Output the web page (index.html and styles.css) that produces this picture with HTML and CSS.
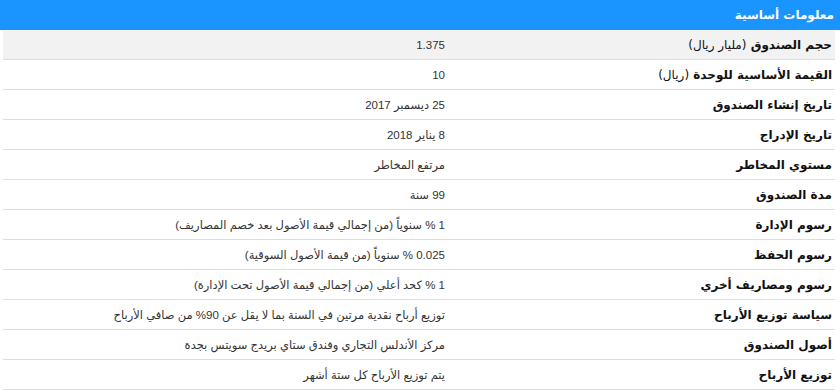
FILE: index.html
```html
<!DOCTYPE html>
<html lang="ar" dir="rtl">
<head>
<meta charset="utf-8">
<link rel="stylesheet" href="styles.css">
</head>
<body>
<div class="panel">
  <div class="panel-head">معلومات أساسية</div>
  <div class="info">
    <div class="row shaded"><div class="label">حجم الصندوق <span class="unit">(مليار ريال)</span></div><div class="value">1.375</div></div>
    <div class="row"><div class="label">القيمة الأساسية للوحدة <span class="unit">(ريال)</span></div><div class="value">10</div></div>
    <div class="row"><div class="label">تاريخ إنشاء الصندوق</div><div class="value">25 ديسمبر 2017</div></div>
    <div class="row"><div class="label">تاريخ الإدراج</div><div class="value">8 يناير 2018</div></div>
    <div class="row"><div class="label">مستوي المخاطر</div><div class="value">مرتفع المخاطر</div></div>
    <div class="row"><div class="label">مدة الصندوق</div><div class="value">99 سنة</div></div>
    <div class="row"><div class="label">رسوم الإدارة</div><div class="value">1 % سنوياً (من إجمالي قيمة الأصول بعد خصم المصاريف)</div></div>
    <div class="row"><div class="label">رسوم الحفظ</div><div class="value">0.025 % سنوياً (من قيمة الأصول السوقية)</div></div>
    <div class="row"><div class="label">رسوم ومصاريف أخري</div><div class="value">1 % كحد أعلي (من إجمالي قيمة الأصول تحت الإدارة)</div></div>
    <div class="row"><div class="label">سياسة توزيع الأرباح</div><div class="value">توزيع أرباح نقدية مرتين في السنة بما لا يقل عن 90% من صافي الأرباح</div></div>
    <div class="row"><div class="label">أصول الصندوق</div><div class="value">مركز الأندلس التجاري وفندق ستاي بريدج سويتس بجدة</div></div>
    <div class="row"><div class="label">توزيع الأرباح</div><div class="value">يتم توزيع الأرباح كل ستة أشهر</div></div>
  </div>
</div>
</body>
</html>
```
FILE: styles.css
```css
html, body {
  margin: 0;
  padding: 0;
  background: #ffffff;
}
body {
  font-family: "DejaVu Sans", "Liberation Sans", sans-serif;
  font-size: 12px;
  color: #333333;
  width: 840px;
  overflow: hidden;
}
.panel-head {
  height: 30px;
  line-height: 30px;
  background: #1a94ff;
  color: #ffffff;
  font-weight: bold;
  font-size: 12px;
  padding-right: 6px;
  box-sizing: border-box;
}
.info {
  width: 832px;
  margin-right: 5px;
}
.row {
  display: grid;
  grid-template-columns: 382px 1fr;
  height: 30px;
  padding-top: 1px;
  border-bottom: 1px solid #dddddd;
  box-sizing: border-box;
  align-items: center;
}
.row.shaded {
  background: #f2f2f2;
}
.label {
  font-weight: bold;
  color: #111111;
  padding-right: 3px;
  white-space: nowrap;
}
.unit {
  font-weight: normal;
}
.value {
  font-family: "Liberation Sans", "DejaVu Sans", sans-serif;
  font-size: 11.5px;
  padding-right: 8px;
  color: #333333;
  white-space: nowrap;
}
```
